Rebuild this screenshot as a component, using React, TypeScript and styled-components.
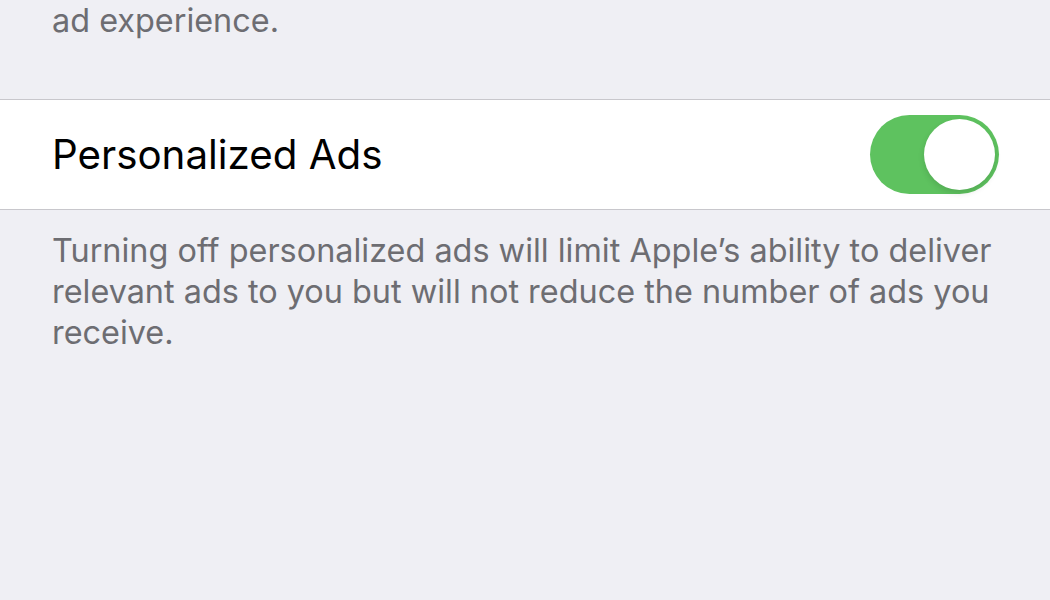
import React from 'react';
import styled, { createGlobalStyle } from 'styled-components';

const GlobalStyle = createGlobalStyle`
  html, body {
    margin: 0;
    padding: 0;
    background: #efeff4;
    font-family: Inter, "Noto Sans", "Liberation Sans", sans-serif;
    -webkit-font-smoothing: antialiased;
  }
`;

const Screen = styled.div`
  width: 1050px;
  height: 600px;
  overflow: hidden;
  background: #efeff4;
`;

const FooterText = styled.p<{ $top?: number; $bottom?: number }>`
  margin: 0;
  padding: ${(p) => p.$top ?? 0}px 52px ${(p) => p.$bottom ?? 0}px;
  font-size: 32.4px;
  line-height: 41px;
  color: #6d6d72;
`;

const Group = styled.div`
  background: #ffffff;
  border-top: 1px solid #c8c7cc;
  border-bottom: 1px solid #c8c7cc;
`;

const Row = styled.div`
  height: 109px;
  display: flex;
  align-items: center;
  justify-content: space-between;
  padding: 0 51px 0 52px;
`;

const Label = styled.span`
  font-size: 40.3px;
  color: #000000;
`;

const Switch = styled.div<{ $on: boolean }>`
  position: relative;
  width: 129px;
  height: 79px;
  border-radius: 40px;
  background: ${(p) => (p.$on ? '#5ec25f' : '#e9e9eb')};
  flex-shrink: 0;
`;

const Knob = styled.div<{ $on: boolean }>`
  position: absolute;
  top: 4px;
  left: ${(p) => (p.$on ? 54 : 4)}px;
  width: 71px;
  height: 71px;
  border-radius: 50%;
  background: #ffffff;
  box-shadow: 0 3px 6px rgba(0, 0, 0, 0.12);
`;

const App: React.FC = () => {
  return (
    <Screen>
      <GlobalStyle />
      <FooterText $top={0} $bottom={58}>ad experience.</FooterText>
      <Group>
        <Row>
          <Label>Personalized Ads</Label>
          <Switch $on>
            <Knob $on />
          </Switch>
        </Row>
      </Group>
      <FooterText $top={20}>
        Turning off personalized ads will limit Apple’s ability to deliver
        relevant ads to you but will not reduce the number of ads you
        receive.
      </FooterText>
    </Screen>
  );
};

export default App;
